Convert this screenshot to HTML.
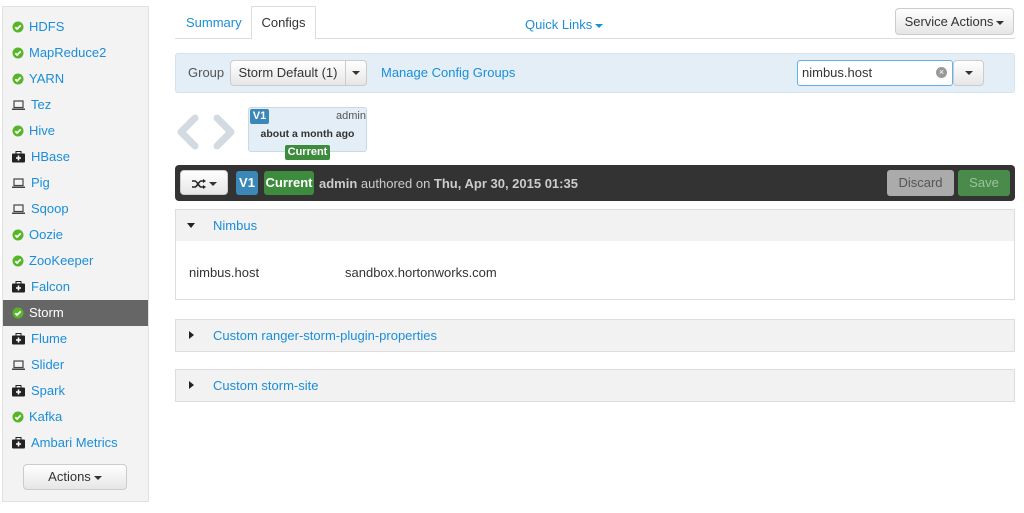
<!DOCTYPE html>
<html><head><meta charset="utf-8"><style>
*{box-sizing:border-box;margin:0;padding:0}
body{width:1024px;height:513px;background:#fff;font-family:"Liberation Sans",Arial,sans-serif;font-size:13px;color:#333;position:relative;overflow:hidden}
.a{position:absolute}
a,.l{color:#1a8ed8;text-decoration:none}
.side{left:2px;top:6px;width:147px;height:496px;background:#f3f3f3;border:1px solid #e1e1e1}
.it{position:absolute;left:0;width:145px;height:26px;line-height:26px;padding-left:26px;color:#1a8ed8;font-size:13px}
.it.sel{background:#666;color:#fff}
.ic{position:absolute;left:9px;top:7px;width:12px;height:12px}
.btn{position:absolute;background:linear-gradient(#fff,#e6e6e6);border:1px solid #ccc;border-radius:4px;text-align:center;color:#333}
.car{display:inline-block;width:0;height:0;border-left:4px solid transparent;border-right:4px solid transparent;border-top:4px solid #333;vertical-align:middle;margin-left:3px}
.panel{position:absolute;left:175px;width:840px;border:1px solid #ddd;background:#fff}
.ph{height:31px;background:#f2f2f2;line-height:31px;padding-left:37px;color:#1a8ed8;position:relative}
.tri{position:absolute;left:13px;top:12px;width:0;height:0}
</style></head><body>
<div class="a side">
<div class="it" style="top:7px"><svg class="ic" viewBox="0 0 12 12"><circle cx="6" cy="6" r="5.5" fill="#57b52a"/><path d="M3.3 6.2l1.8 1.8 3.6-3.6" stroke="#fff" stroke-width="1.8" fill="none"/></svg>HDFS</div>
<div class="it" style="top:33px"><svg class="ic" viewBox="0 0 12 12"><circle cx="6" cy="6" r="5.5" fill="#57b52a"/><path d="M3.3 6.2l1.8 1.8 3.6-3.6" stroke="#fff" stroke-width="1.8" fill="none"/></svg>MapReduce2</div>
<div class="it" style="top:59px"><svg class="ic" viewBox="0 0 12 12"><circle cx="6" cy="6" r="5.5" fill="#57b52a"/><path d="M3.3 6.2l1.8 1.8 3.6-3.6" stroke="#fff" stroke-width="1.8" fill="none"/></svg>YARN</div>
<div class="it" style="top:85px;padding-left:28px"><svg class="ic" viewBox="0 0 13 12" style="width:13px"><rect x="2" y="2" width="9" height="6.5" fill="none" stroke="#444" stroke-width="1.2"/><rect x="0" y="9.5" width="13" height="1.5" fill="#444"/></svg>Tez</div>
<div class="it" style="top:111px"><svg class="ic" viewBox="0 0 12 12"><circle cx="6" cy="6" r="5.5" fill="#57b52a"/><path d="M3.3 6.2l1.8 1.8 3.6-3.6" stroke="#fff" stroke-width="1.8" fill="none"/></svg>Hive</div>
<div class="it" style="top:137px;padding-left:28px"><svg class="ic" viewBox="0 0 13 12" style="width:13px"><rect x="0" y="2.5" width="13" height="9" rx="1" fill="#222"/><rect x="4" y="0.5" width="5" height="2.5" fill="none" stroke="#222"/><path d="M6.5 4.5v5M4 7h5" stroke="#fff" stroke-width="1.6"/></svg>HBase</div>
<div class="it" style="top:163px;padding-left:28px"><svg class="ic" viewBox="0 0 13 12" style="width:13px"><rect x="2" y="2" width="9" height="6.5" fill="none" stroke="#444" stroke-width="1.2"/><rect x="0" y="9.5" width="13" height="1.5" fill="#444"/></svg>Pig</div>
<div class="it" style="top:189px;padding-left:28px"><svg class="ic" viewBox="0 0 13 12" style="width:13px"><rect x="2" y="2" width="9" height="6.5" fill="none" stroke="#444" stroke-width="1.2"/><rect x="0" y="9.5" width="13" height="1.5" fill="#444"/></svg>Sqoop</div>
<div class="it" style="top:215px"><svg class="ic" viewBox="0 0 12 12"><circle cx="6" cy="6" r="5.5" fill="#57b52a"/><path d="M3.3 6.2l1.8 1.8 3.6-3.6" stroke="#fff" stroke-width="1.8" fill="none"/></svg>Oozie</div>
<div class="it" style="top:241px"><svg class="ic" viewBox="0 0 12 12"><circle cx="6" cy="6" r="5.5" fill="#57b52a"/><path d="M3.3 6.2l1.8 1.8 3.6-3.6" stroke="#fff" stroke-width="1.8" fill="none"/></svg>ZooKeeper</div>
<div class="it" style="top:267px;padding-left:28px"><svg class="ic" viewBox="0 0 13 12" style="width:13px"><rect x="0" y="2.5" width="13" height="9" rx="1" fill="#222"/><rect x="4" y="0.5" width="5" height="2.5" fill="none" stroke="#222"/><path d="M6.5 4.5v5M4 7h5" stroke="#fff" stroke-width="1.6"/></svg>Falcon</div>
<div class="it sel" style="top:293px"><svg class="ic" viewBox="0 0 12 12"><circle cx="6" cy="6" r="5.5" fill="#57b52a"/><path d="M3.3 6.2l1.8 1.8 3.6-3.6" stroke="#fff" stroke-width="1.8" fill="none"/></svg>Storm</div>
<div class="it" style="top:319px;padding-left:28px"><svg class="ic" viewBox="0 0 13 12" style="width:13px"><rect x="0" y="2.5" width="13" height="9" rx="1" fill="#222"/><rect x="4" y="0.5" width="5" height="2.5" fill="none" stroke="#222"/><path d="M6.5 4.5v5M4 7h5" stroke="#fff" stroke-width="1.6"/></svg>Flume</div>
<div class="it" style="top:345px;padding-left:28px"><svg class="ic" viewBox="0 0 13 12" style="width:13px"><rect x="2" y="2" width="9" height="6.5" fill="none" stroke="#444" stroke-width="1.2"/><rect x="0" y="9.5" width="13" height="1.5" fill="#444"/></svg>Slider</div>
<div class="it" style="top:371px;padding-left:28px"><svg class="ic" viewBox="0 0 13 12" style="width:13px"><rect x="0" y="2.5" width="13" height="9" rx="1" fill="#222"/><rect x="4" y="0.5" width="5" height="2.5" fill="none" stroke="#222"/><path d="M6.5 4.5v5M4 7h5" stroke="#fff" stroke-width="1.6"/></svg>Spark</div>
<div class="it" style="top:397px"><svg class="ic" viewBox="0 0 12 12"><circle cx="6" cy="6" r="5.5" fill="#57b52a"/><path d="M3.3 6.2l1.8 1.8 3.6-3.6" stroke="#fff" stroke-width="1.8" fill="none"/></svg>Kafka</div>
<div class="it" style="top:423px;padding-left:28px"><svg class="ic" viewBox="0 0 13 12" style="width:13px"><rect x="0" y="2.5" width="13" height="9" rx="1" fill="#222"/><rect x="4" y="0.5" width="5" height="2.5" fill="none" stroke="#222"/><path d="M6.5 4.5v5M4 7h5" stroke="#fff" stroke-width="1.6"/></svg>Ambari Metrics</div>
<div class="btn" style="left:20px;top:457px;width:104px;height:26px;line-height:24px">Actions<span class="car"></span></div>
</div>

<a class="a" style="left:186px;top:15px">Summary</a>
<div class="a" style="left:251px;top:6px;width:65px;height:33px;border:1px solid #ddd;border-bottom:none;background:#fff;line-height:31px;text-align:center;z-index:2">Configs</div>
<div class="a" style="left:175px;top:38px;width:840px;height:1px;background:#ddd"></div>
<a class="a" style="left:525px;top:17px">Quick Links<span class="car" style="border-top-color:#1a8ed8"></span></a>
<div class="btn" style="left:895px;top:8px;width:119px;height:27px;line-height:25px">Service Actions<span class="car"></span></div>

<div class="a" style="left:175px;top:53px;width:840px;height:40px;background:#e3eef6;border:1px solid #d5e3ee;border-radius:3px"></div>
<div class="a" style="left:188px;top:65px;color:#555">Group</div>
<div class="btn" style="left:230px;top:60px;width:116px;height:26px;line-height:24px;border-radius:4px 0 0 4px">Storm Default (1)</div>
<div class="btn" style="left:345px;top:60px;width:22px;height:26px;line-height:22px;border-radius:0 4px 4px 0"><span class="car" style="margin:0"></span></div>
<a class="a" style="left:381px;top:65px">Manage Config Groups</a>
<div class="a" style="left:797px;top:60px;width:156px;height:26px;border:1px solid #66afe9;background:#fff;border-radius:3px;line-height:24px;padding-left:4px;color:#333">nimbus.host</div>
<div class="a" style="left:936px;top:67px;width:11px;height:11px;border-radius:50%;background:#999;color:#fff;font-size:9px;line-height:11px;text-align:center">×</div>
<div class="btn" style="left:953px;top:60px;width:31px;height:26px;line-height:22px"><span class="car" style="margin:0"></span></div>

<svg class="a" style="left:175px;top:114px" width="62" height="36" viewBox="0 0 62 36"><path d="M20 4L6 18l14 14" stroke="#d3dae1" stroke-width="7" fill="none" stroke-linecap="round" stroke-linejoin="round"/><path d="M42 4l14 14-14 14" stroke="#d3dae1" stroke-width="7" fill="none" stroke-linecap="round" stroke-linejoin="round"/></svg>
<div class="a" style="left:248px;top:107px;width:119px;height:45px;background:#e3eef6;border:1px solid #c9d9e6;border-radius:3px"></div>
<div class="a" style="left:250px;top:109px;width:19px;height:15px;background:#3b87b8;color:#fff;font-weight:bold;font-size:11px;line-height:15px;text-align:center;border-radius:2px">V1</div>
<div class="a" style="left:336px;top:110px;font-size:11px;color:#555">admin</div>
<div class="a" style="left:248px;top:128px;width:119px;text-align:center;font-size:10.5px;font-weight:bold;color:#333">about a month ago</div>
<div class="a" style="left:285px;top:145px;width:45px;height:15px;background:#3d8b3d;color:#fff;font-size:11px;font-weight:bold;line-height:15px;text-align:center;border-radius:2px">Current</div>

<div class="a" style="left:175px;top:165px;width:840px;height:36px;background:#333;border-radius:4px"></div>
<div class="btn" style="left:180px;top:170px;width:48px;height:25px;line-height:23px"><svg width="14" height="10" viewBox="0 0 14 10" style="vertical-align:middle"><path d="M0 2h3c2 0 4 6 6 6h3M0 8h3c2 0 4-6 6-6h3" stroke="#222" stroke-width="1.6" fill="none"/><path d="M11 0l3 2-3 2zM11 6l3 2-3 2z" fill="#222"/></svg><span class="car"></span></div>
<div class="a" style="left:236px;top:171px;width:22px;height:24px;background:#3b87b8;color:#fff;font-weight:bold;line-height:24px;text-align:center;border-radius:3px">V1</div>
<div class="a" style="left:264px;top:171px;width:50px;height:24px;background:#3d8b3d;color:#fff;font-weight:bold;line-height:24px;text-align:center;border-radius:3px">Current</div>
<div class="a" style="left:319px;top:176px;color:#ccc"><b>admin</b> authored on <b>Thu, Apr 30, 2015 01:35</b></div>
<div class="a" style="left:887px;top:170px;width:67px;height:26px;background:#ababab;border-radius:3px;color:#555;line-height:26px;text-align:center">Discard</div>
<div class="a" style="left:958px;top:170px;width:52px;height:26px;background:#4a8a4a;border-radius:3px;color:#9cc49c;line-height:26px;text-align:center">Save</div>

<div class="panel" style="top:209px;height:91px">
<div class="ph"><span class="tri" style="border-left:4px solid transparent;border-right:4px solid transparent;border-top:5px solid #222;top:13px;left:11px"></span>Nimbus</div>
<div class="a" style="left:13px;top:55px">nimbus.host</div>
<div class="a" style="left:169px;top:55px">sandbox.hortonworks.com</div>
</div>
<div class="panel" style="top:319px;height:33px"><div class="ph"><span class="tri" style="border-top:4px solid transparent;border-bottom:4px solid transparent;border-left:5px solid #222;top:11px"></span>Custom ranger-storm-plugin-properties</div></div>
<div class="panel" style="top:369px;height:33px"><div class="ph"><span class="tri" style="border-top:4px solid transparent;border-bottom:4px solid transparent;border-left:5px solid #222;top:11px"></span>Custom storm-site</div></div>
</body></html>
